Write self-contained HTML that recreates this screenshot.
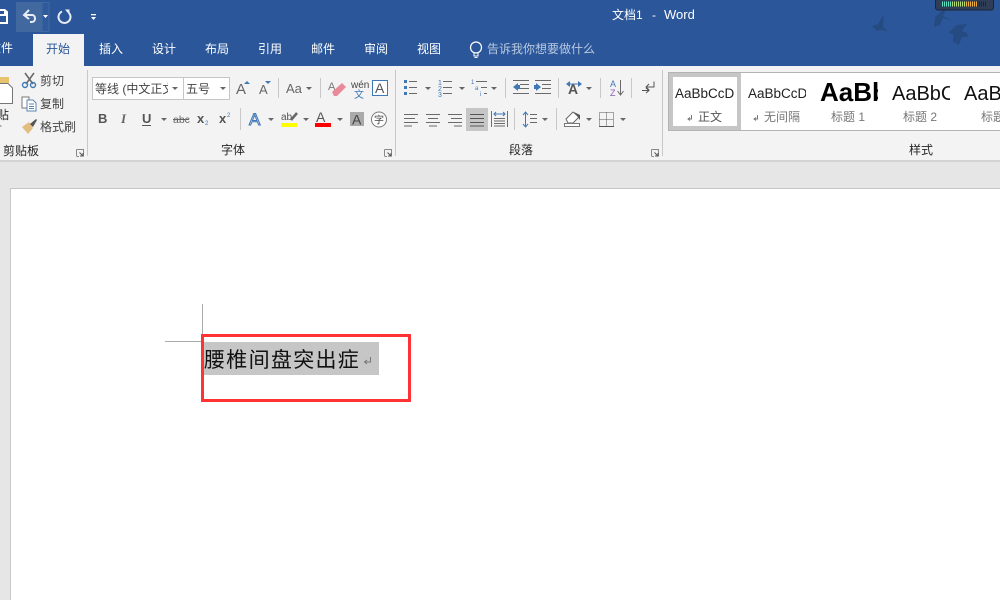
<!DOCTYPE html>
<html><head><meta charset="utf-8"><style>
html,body{margin:0;padding:0;width:1000px;height:600px;overflow:hidden;background:#e6e6e6}
svg{display:block}
text{font-family:"Liberation Sans","Noto Sans CJK SC",sans-serif}
.t{font-size:12px;fill:#fff}
.r{font-size:12px;fill:#444}
.g{font-size:12px;fill:#262626}
.s{font-size:12px;fill:#777}
.l{stroke:#6a6a6a;stroke-width:1;fill:none}
.b{stroke:#3f78b5;stroke-width:1.4;fill:none}
.sep{stroke:#c8c8c8;stroke-width:1}
</style></head><body>
<svg width="1000" height="600" viewBox="0 0 1000 600" xmlns="http://www.w3.org/2000/svg">
<defs>
<polygon id="a" points="0,0 6,0 3,3" fill="#666"/>
<g id="lc" fill="none" stroke="#888" stroke-width="1"><path d="M0.5 0.5H7.5V7.5M0.5 0.5V7M0.5 7.5H3"/><path d="M3.5 3.5L7 7" stroke="#555"/><path d="M4 7H7V4" stroke="#555"/></g>
<clipPath id="c1"><rect x="94" y="78" width="74" height="20"/></clipPath>
<clipPath id="c2"><rect x="673" y="80" width="61" height="26"/></clipPath>
<clipPath id="c3"><rect x="746" y="80" width="60" height="26"/></clipPath>
<clipPath id="c4"><rect x="818" y="74" width="60" height="36"/></clipPath>
<clipPath id="c5"><rect x="890" y="74" width="60" height="36"/></clipPath>
</defs>

<!-- Title bar -->
<rect width="1000" height="66" fill="#2b579a"/>
<rect x="16" y="2" width="33" height="30" fill="#41689f"/>
<rect x="42" y="2.500" width="7" height="29" fill="#2f5b9d" stroke="#41689f"/>
<path d="M0 9H5L8 11.500V24H0Z" fill="#fff"/>
<rect x="0" y="11" width="4" height="3" fill="#2b579a"/>
<rect x="0" y="16" width="6" height="6" fill="#2b579a"/>
<path d="M29 10L24 15L29 19M24.500 15H32C36 15 36 22 32 22H30" fill="none" stroke="#e8edf5" stroke-width="2"/>
<polygon points="43,15 48,15 45.500,18" fill="#fff"/>
<path d="M62 11.500A6 6 0 1 0 69 13" fill="none" stroke="#e8edf5" stroke-width="2"/>
<polygon points="65,9.500 69.500,9.500 69.500,15" fill="#e8edf5"/>
<rect x="91" y="14" width="5" height="1.300" fill="#fff"/><polygon points="91,17 96,17 93.500,20" fill="#fff"/>
<text x="612" y="19" font-size="12" fill="#fff">文档1</text>
<text x="652" y="19" font-size="12" fill="#fff">-</text>
<text x="664" y="19" font-size="13" fill="#fff">Word</text>

<path d="M872 26L878 24L884 14L883 27L888 31L880 30L877 31Z" fill="#26497f" opacity=".85"/>
<path d="M943 10L935 17L934 27L940 25L943 18L953 21L943 16L946 10Z" fill="#26497f" opacity=".85"/>
<path d="M967 24L957 25L948 33L953 34L953 42L959 45L962 37L968 37L967 33L962 31Z" fill="#26497f" opacity=".85"/>

<rect x="935.500" y="-3" width="58" height="13" rx="2.500" fill="#2f3d57" stroke="#1b2436"/>
<path d="M942 4H952" stroke="#5fe0c0" stroke-width="5" stroke-dasharray="1 1"/>
<path d="M952 4H966" stroke="#b4dc78" stroke-width="5" stroke-dasharray="1 1"/>
<path d="M966 4H977" stroke="#f0b040" stroke-width="5" stroke-dasharray="1 1"/>
<path d="M977 4H987" stroke="#1c2536" stroke-width="5" stroke-dasharray="1 1"/>

<!-- Tabs -->
<rect x="33" y="34" width="51" height="32" fill="#f3f3f3"/>
<text class="t" x="-11" y="52">文件</text>
<text x="46" y="53" font-size="12" fill="#2b579a">开始</text>
<text class="t" x="99" y="53">插入</text>
<text class="t" x="152" y="53">设计</text>
<text class="t" x="205" y="53">布局</text>
<text class="t" x="258" y="53">引用</text>
<text class="t" x="311" y="53">邮件</text>
<text class="t" x="364" y="53">审阅</text>
<text class="t" x="417" y="53">视图</text>
<circle cx="476" cy="47.500" r="5.500" fill="none" stroke="#fff" stroke-width="1.200"/>
<path d="M474 53V56H478V53M474.500 57.500H477.500" fill="none" stroke="#fff"/>
<text x="487" y="53" font-size="12" fill="#b9c8e0">告诉我你想要做什么</text>

<!-- Ribbon -->
<rect y="66" width="1000" height="94" fill="#f3f3f3"/>
<rect y="160" width="1000" height="2" fill="#d4d4d4"/>
<path class="sep" d="M87.500 70V156M395.500 70V156M662.500 70V156M278.500 78V98M320.500 78V98M240.500 108V130M505.500 78V98M558.500 78V98M600.500 78V98M631.500 78V98M514.500 108V130M556.500 108V130"/>

<!-- Clipboard -->
<rect x="0" y="77" width="9" height="6" fill="#e8c36e"/>
<path d="M-2 83.500H8L12.500 88V103.500H-2Z" fill="#fff" stroke="#777"/>
<text class="g" x="-3" y="119">贴</text>
<path d="M0 126H1.500" stroke="#666"/>
<path d="M25 73L33 84M34 73L26 84" stroke="#666" stroke-width="1.500"/>
<circle cx="25" cy="85" r="2.500" class="b"/><circle cx="33" cy="85" r="2.500" class="b"/>
<text class="r" x="40" y="85">剪切</text>
<path d="M22 97H29V108H22Z" fill="#fff" stroke="#777"/><path d="M27 100H33L36 103V111H27Z" fill="#fff" stroke="#5b86b5"/><path d="M29 104H34M29 106.500H34M29 108.500H34" stroke="#5b86b5"/>
<text class="r" x="40" y="108">复制</text>
<path d="M22 127L29 122L33 128L28 134Z" fill="#e3bd80"/><path d="M30 124L36 119L37 120L33 127Z" fill="#555"/>
<text class="r" x="40" y="131">格式刷</text>
<text class="g" x="3" y="155">剪贴板</text>
<use href="#lc" x="76" y="149"/>

<!-- Font group -->
<rect x="92.500" y="77.500" width="91" height="22" fill="#fff" stroke="#c6c6c6"/>
<rect x="183.500" y="77.500" width="46" height="22" fill="#fff" stroke="#c6c6c6"/>
<text class="r" x="95" y="93" clip-path="url(#c1)">等线 (中文正文)</text>
<use href="#a" x="172" y="87"/>
<text class="r" x="186" y="93" font-size="12">五号</text>
<use href="#a" x="220" y="87"/>

<text x="236" y="94" font-size="15" fill="#666">A</text><polygon points="244,84 250,84 247,81" fill="#3f78b5"/>
<text x="259" y="94" font-size="13" fill="#666">A</text><polygon points="265,81 271,81 268,84" fill="#3f78b5"/>
<text x="286" y="93" font-size="13" fill="#666">Aa</text><use href="#a" x="306" y="87"/>
<text x="328" y="90" font-size="11" fill="#777">A</text>
<path d="M332 92L342 83L346 87L337 96H334Z" fill="#e98a9a"/>
<text x="351" y="88" font-size="10" fill="#444">wén</text>
<text x="354" y="98" font-size="10" fill="#3f78b5">文</text>
<rect x="372.500" y="80.500" width="15" height="15" fill="#fff" stroke="#3f78b5"/>
<text x="375" y="93" font-size="14" fill="#555">A</text>

<text x="98" y="123" font-size="13" font-weight="bold" fill="#555">B</text>
<text x="121" y="123" font-size="13" font-weight="bold" font-style="italic" style="font-family:'Liberation Serif',serif" fill="#666">I</text>
<text x="142" y="123" font-size="13" font-weight="bold" fill="#555">U</text><path d="M142 125.500H151" stroke="#555"/>
<use href="#a" x="161" y="118"/>
<text x="173" y="123" font-size="10.500" fill="#666">abc</text><path d="M173 119.500H189" stroke="#666"/>
<text x="197" y="123" font-size="13" font-weight="bold" fill="#555">x</text><text x="205" y="125" font-size="6" fill="#3f78b5">2</text>
<text x="219" y="123" font-size="13" font-weight="bold" fill="#555">x</text><text x="227" y="117" font-size="6" fill="#3f78b5">2</text>

<text x="249" y="125" font-size="17" fill="#dbe7f5" stroke="#3f78b5" stroke-width="1">A</text>
<use href="#a" x="268" y="118"/>
<text x="281" y="120" font-size="10" fill="#555">ab</text><path d="M291 120L297 113" stroke="#666" stroke-width="2.500"/>
<rect x="281" y="123" width="16" height="4" fill="#ff0"/>
<use href="#a" x="303" y="118"/>
<text x="316" y="122" font-size="14" fill="#555">A</text><rect x="315" y="123" width="16" height="4" fill="#f00"/>
<use href="#a" x="337" y="118"/>
<rect x="350" y="112" width="14" height="14" fill="#aaa"/>
<text x="352" y="124.500" font-size="14" fill="#444">A</text>
<circle cx="379" cy="119.500" r="7.500" fill="#fff" stroke="#777"/>
<text x="374" y="123.500" font-size="10" fill="#444">字</text>
<text class="g" x="221" y="154">字体</text>
<use href="#lc" x="384" y="149"/>

<!-- Paragraph -->
<g fill="#3f78b5"><rect x="404" y="80" width="3" height="3"/><rect x="404" y="86" width="3" height="3"/><rect x="404" y="92" width="3" height="3"/></g>
<path class="l" d="M409 81.500H417M409 87.500H417M409 93.500H417"/>
<use href="#a" x="425" y="87"/>
<g font-size="7" fill="#3f78b5"><text x="438" y="85">1</text><text x="438" y="91">2</text><text x="438" y="97">3</text></g>
<path class="l" d="M443 81.500H452M443 87.500H452M443 93.500H452"/>
<use href="#a" x="459" y="87"/>
<g font-size="6" fill="#3f78b5"><text x="471" y="84">1</text><text x="475" y="90">a</text><text x="480" y="96">i</text></g>
<path class="l" d="M476 81.500H487M481 87.500H487M484 93.500H487"/>
<use href="#a" x="491" y="87"/>
<path class="l" d="M513 80.500H529M520 84.500H529M520 88.500H529M513 93.500H529"/>
<polygon points="513,87 518,83 518,85 520,85 520,89 518,89 518,91" fill="#3f78b5"/>
<path class="l" d="M535 80.500H551M542 84.500H551M542 88.500H551M535 93.500H551"/>
<polygon points="541,87 536,83 536,85 534,85 534,89 536,89 536,91" fill="#3f78b5"/>
<text x="568" y="94" font-size="14" font-weight="bold" fill="#555">A</text>
<path d="M566 84L570 81V87ZM582 84L578 81V87Z" fill="#3f78b5"/><path d="M570 84H578" stroke="#3f78b5"/>
<use href="#a" x="586" y="87"/>
<text x="610" y="87" font-size="9" fill="#3f78b5">A</text><text x="610" y="96" font-size="9" fill="#8a5bb5">Z</text>
<path d="M620.500 80V94M617.500 91L620.500 95L623.500 91" class="l"/>
<path d="M654 81.500V87H647M649 84L646 87L649 90" fill="none" stroke="#555"/>
<path d="M642 90.500H649M646 88L649 90.500L646 93" fill="none" stroke="#555"/>

<path class="l" d="M404 114.500H418M404 118.500H415M404 122.500H418M404 126H412"/>
<path class="l" d="M426 114.500H440M428 118.500H438M426 122.500H440M429 126H437"/>
<path class="l" d="M448 114.500H462M451 118.500H462M448 122.500H462M454 126H462"/>
<rect x="466" y="108" width="22" height="23" fill="#c6c6c6"/>
<path d="M470 114.500H484M470 118.500H484M470 122.500H484M470 126H484" stroke="#555" fill="none"/>
<path d="M491.500 111V127" stroke="#3f78b5"/><path d="M507.500 111V127" stroke="#3f78b5"/>
<path d="M494 114H505M496 112L494 114L496 116M503 112L505 114L503 116" fill="none" stroke="#3f78b5"/>
<path class="l" d="M494 118.500H505M494 121H505M494 123.500H505M494 126H505"/>
<path d="M525.500 112V127M523 115L525.500 112L528 115M523 124L525.500 127L528 124" fill="none" stroke="#3f78b5"/>
<path class="l" d="M530 114.500H537M530 118.500H537M530 122.500H537"/>
<use href="#a" x="542" y="118"/>
<path d="M566 119L573 112L579 117L573 123H568Z" fill="#fff" stroke="#666"/><path d="M574 112L580 115V120L577 116Z" fill="#555"/>
<rect x="564.500" y="123.500" width="15" height="3" fill="#fff" stroke="#777"/>
<use href="#a" x="586" y="118"/>
<path d="M599.500 112.500H613.500V126.500H599.500ZM606.500 112.500V126.500M599.500 119.500H613.500" fill="none" stroke="#555" stroke-dasharray="1 1"/>
<path d="M599 126.500H614" stroke="#555"/>
<use href="#a" x="620" y="118"/>
<text class="g" x="509" y="154">段落</text>
<use href="#lc" x="651" y="149"/>

<!-- Styles gallery -->
<rect x="668.500" y="72.500" width="340" height="58" fill="#fff" stroke="#b4b4b4"/>
<rect x="671" y="75" width="68" height="53" fill="#fff" stroke="#c6c6c6" stroke-width="4"/>
<text x="675" y="98" font-size="13.500" fill="#222" clip-path="url(#c2)">AaBbCcDd</text>
<text x="748" y="98" font-size="13.500" fill="#222" clip-path="url(#c3)">AaBbCcDd</text>
<text x="820" y="101" font-size="26" font-weight="bold" fill="#000" clip-path="url(#c4)">AaBbC</text>
<text x="892" y="100" font-size="20" fill="#111" clip-path="url(#c5)">AaBbCc</text>
<text x="964" y="100" font-size="20" fill="#111">AaB</text>
<path d="M691.500 115V119H688.500M690 117.500L688 119L690 120.500" fill="none" stroke="#777"/>
<text x="698" y="121" font-size="12" fill="#555">正文</text>
<path d="M757.500 115V119H754.500M756 117.500L754 119L756 120.500" fill="none" stroke="#777"/>
<text class="s" x="764" y="121">无间隔</text>
<text class="s" x="831" y="121">标题 1</text>
<text class="s" x="903" y="121">标题 2</text>
<text class="s" x="981" y="121">标题</text>
<text class="g" x="909" y="154">样式</text>

<!-- Document -->
<rect x="0" y="162" width="1000" height="438" fill="#e6e6e6"/>
<rect x="10.500" y="188.500" width="1000" height="420" fill="#fff" stroke="#c6c6c6"/>
<path d="M202.500 304V341.500H165" fill="none" stroke="#aaa"/>
<rect x="204" y="342" width="175" height="33" fill="#c6c6c6"/>
<text x="204" y="367" font-size="21" letter-spacing="1.300" fill="#111" font-weight="300" style="font-family:'Liberation Sans','WenQuanYi Zen Hei',sans-serif">腰椎间盘突出症</text>
<path d="M370.500 357V362H365M367 360L364.500 362L367 364" fill="none" stroke="#777"/>
<rect x="202.500" y="335.500" width="207" height="65" fill="none" stroke="#f33" stroke-width="3"/>
</svg>
</body></html>
